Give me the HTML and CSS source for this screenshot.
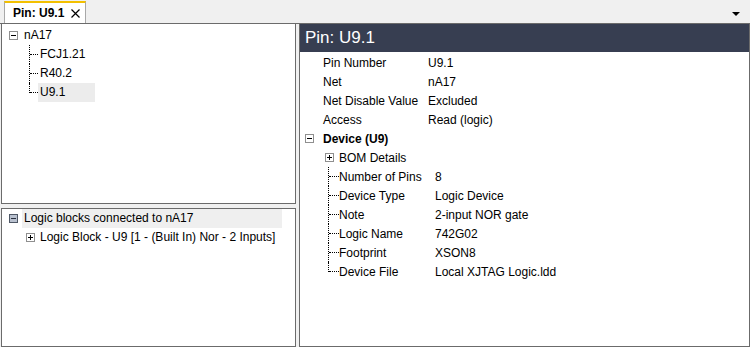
FILE: index.html
```html
<!DOCTYPE html>
<html lang="en">
<head>
  <meta charset="utf-8" />
  <title>Pin: U9.1</title>
  <link rel="stylesheet" href="styles.css">
</head>
<body>
  <!-- TAB STRIP -->
  <div class="tabstrip">
    <div class="tab">
      <span class="tab-title">Pin: U9.1</span>
      <svg class="tab-close" width="9" height="9" viewBox="0 0 9 9">
        <path d="M0.5 0.5L8.5 8.5M8.5 0.5L0.5 8.5" stroke="#000" stroke-width="1.2" fill="none" />
      </svg>
    </div>
    <span class="tab-menu"></span>
  </div>

  <div class="workspace">
    <div class="left-col">
      <!-- NET TREE -->
      <div class="panel net-panel">
        <div class="row">
          <span class="expander minus root-box"></span>
          <span class="label root-label">nA17</span>
        </div>
        <div class="row child">
          <span class="conn"></span><span class="label">FCJ1.21</span>
        </div>
        <div class="row child">
          <span class="conn"></span><span class="label">R40.2</span>
        </div>
        <div class="row child last">
          <span class="conn"></span><span class="label selected">U9.1</span>
        </div>
      </div>

      <!-- LOGIC BLOCKS -->
      <div class="panel logic-panel">
        <div class="row">
          <span class="expander minus hot root-box"></span>
          <span class="label hover">Logic blocks connected to nA17</span>
        </div>
        <div class="row">
          <span class="expander plus block-box"></span>
          <span class="label block-label">Logic Block - U9 [1 - (Built In) Nor - 2 Inputs]</span>
        </div>
      </div>
    </div>

    <!-- DETAILS -->
    <div class="panel detail-panel">
      <div class="detail-head">Pin: U9.1</div>
      <div class="props">
        <div class="row prop"><span class="prop-name">Pin Number</span><span>U9.1</span></div>
        <div class="row prop"><span class="prop-name">Net</span><span>nA17</span></div>
        <div class="row prop"><span class="prop-name">Net Disable Value</span><span>Excluded</span></div>
        <div class="row prop"><span class="prop-name">Access</span><span>Read (logic)</span></div>

        <div class="row group">
          <span class="expander minus group-box"></span>
          <span class="group-name">Device (U9)</span>
        </div>
        <div class="row">
          <span class="expander plus bom-box"></span>
          <span>BOM Details</span>
        </div>
        <div class="row sub"><span class="conn"></span><span class="sub-name">Number of Pins</span><span>8</span></div>
        <div class="row sub"><span class="conn"></span><span class="sub-name">Device Type</span><span>Logic Device</span></div>
        <div class="row sub"><span class="conn"></span><span class="sub-name">Note</span><span>2-input NOR gate</span></div>
        <div class="row sub"><span class="conn"></span><span class="sub-name">Logic Name</span><span>742G02</span></div>
        <div class="row sub"><span class="conn"></span><span class="sub-name">Footprint</span><span>XSON8</span></div>
        <div class="row sub last"><span class="conn"></span><span class="sub-name">Device File</span><span>Local XJTAG Logic.ldd</span></div>
      </div>
    </div>
  </div>
</body>
</html>
```

FILE: styles.css
```css
/* ========== GLOBAL ========== */
* {
  box-sizing: border-box;
  margin: 0;
  padding: 0;
}
body {
  width: 750px;
  height: 347px;
  overflow: hidden;
  background: #f0f0f0;
  color: #000;
  font-family: "Liberation Sans", Arial, sans-serif;
  font-size: 12px;
}

/* ========== TAB STRIP ========== */
.tabstrip {
  height: 24px;
  display: flex;
  align-items: flex-start;
  border-bottom: 1px solid #6b6b6b;
}
.tab {
  margin: 1px 0 0 4px;
  height: 22px;
  width: 82px;
  display: flex;
  align-items: center;
  padding-left: 8px;
  background: #fff;
  border-top: 2px solid #f3c000;
  border-left: 1px solid #a8a8a8;
  border-right: 1px solid #a8a8a8;
}
.tab-title {
  font-weight: bold;
}
.tab-close {
  margin-left: 7px;
}
.tab-menu {
  margin: 12px 10px 0 auto;
  width: 0;
  height: 0;
  border-left: 4px solid transparent;
  border-right: 4px solid transparent;
  border-top: 4px solid #000;
}

/* ========== PANELS ========== */
.workspace {
  height: 323px;
  display: flex;
  gap: 3px;
  padding-left: 1px;
}
.left-col {
  width: 295px;
  display: flex;
  flex-direction: column;
  gap: 4px;
}
.panel {
  background: #fff;
  border: 1px solid #6b6b6b;
}
.net-panel {
  height: 180px;
  border-top: none;
  padding-top: 2px;
}
.logic-panel {
  flex: 1;
}
.detail-panel {
  width: 451px;
  border-top: none;
}

/* ========== TREE ROWS ========== */
.row {
  height: 19px;
  display: flex;
  align-items: center;
  white-space: nowrap;
}
.label {
  padding: 0 2px;
  height: 19px;
  line-height: 19px;
}
.selected {
  width: 57px;
  background: #ececec;
}
.hover {
  width: 260px;
  background: #efefef;
}

.expander {
  position: relative;
  flex: none;
  width: 9px;
  height: 9px;
  border: 1px solid #8f8f8f;
  background: #fff;
}
.expander::before {
  content: "";
  position: absolute;
  left: 1px;
  top: 3px;
  width: 5px;
  height: 1px;
  background: #000;
}
.plus::after {
  content: "";
  position: absolute;
  left: 3px;
  top: 1px;
  width: 1px;
  height: 5px;
  background: #000;
}
.expander.hot {
  border-color: #4f5866;
  background: #b9c1cf;
}
.expander.hot::before {
  background: #2a3040;
}

.conn {
  position: relative;
  flex: none;
  width: 9px;
  height: 19px;
}
.conn::before {
  content: "";
  position: absolute;
  left: 0;
  top: 0;
  bottom: 0;
  border-left: 1px dotted #000;
}
.conn::after {
  content: "";
  position: absolute;
  left: 1px;
  right: 0;
  top: 9px;
  border-top: 1px dotted #000;
}
.last .conn::before {
  bottom: 9px;
}

.root-box {
  margin-left: 7px;
}
.root-label {
  margin-left: 4px;
}
.child .conn {
  margin-left: 27px;
}
.logic-panel .hover {
  margin-left: 4px;
}
.block-box {
  margin-left: 24px;
}
.block-label {
  margin-left: 3px;
}

/* ========== DETAILS ========== */
.detail-head {
  height: 28px;
  padding-left: 5px;
  background: #373e51;
  color: #fff;
  font-size: 17px;
  line-height: 28px;
}
.props {
  padding-top: 1px;
}
.prop {
  padding-left: 23px;
}
.prop-name {
  width: 105px;
}
.group-box {
  margin-left: 5px;
}
.group-name {
  margin-left: 9px;
  font-weight: bold;
}
.bom-box {
  margin: 0 5px 0 25px;
}
.sub .conn {
  margin-left: 28px;
  width: 11px;
}
.sub-name {
  width: 96px;
}
```
